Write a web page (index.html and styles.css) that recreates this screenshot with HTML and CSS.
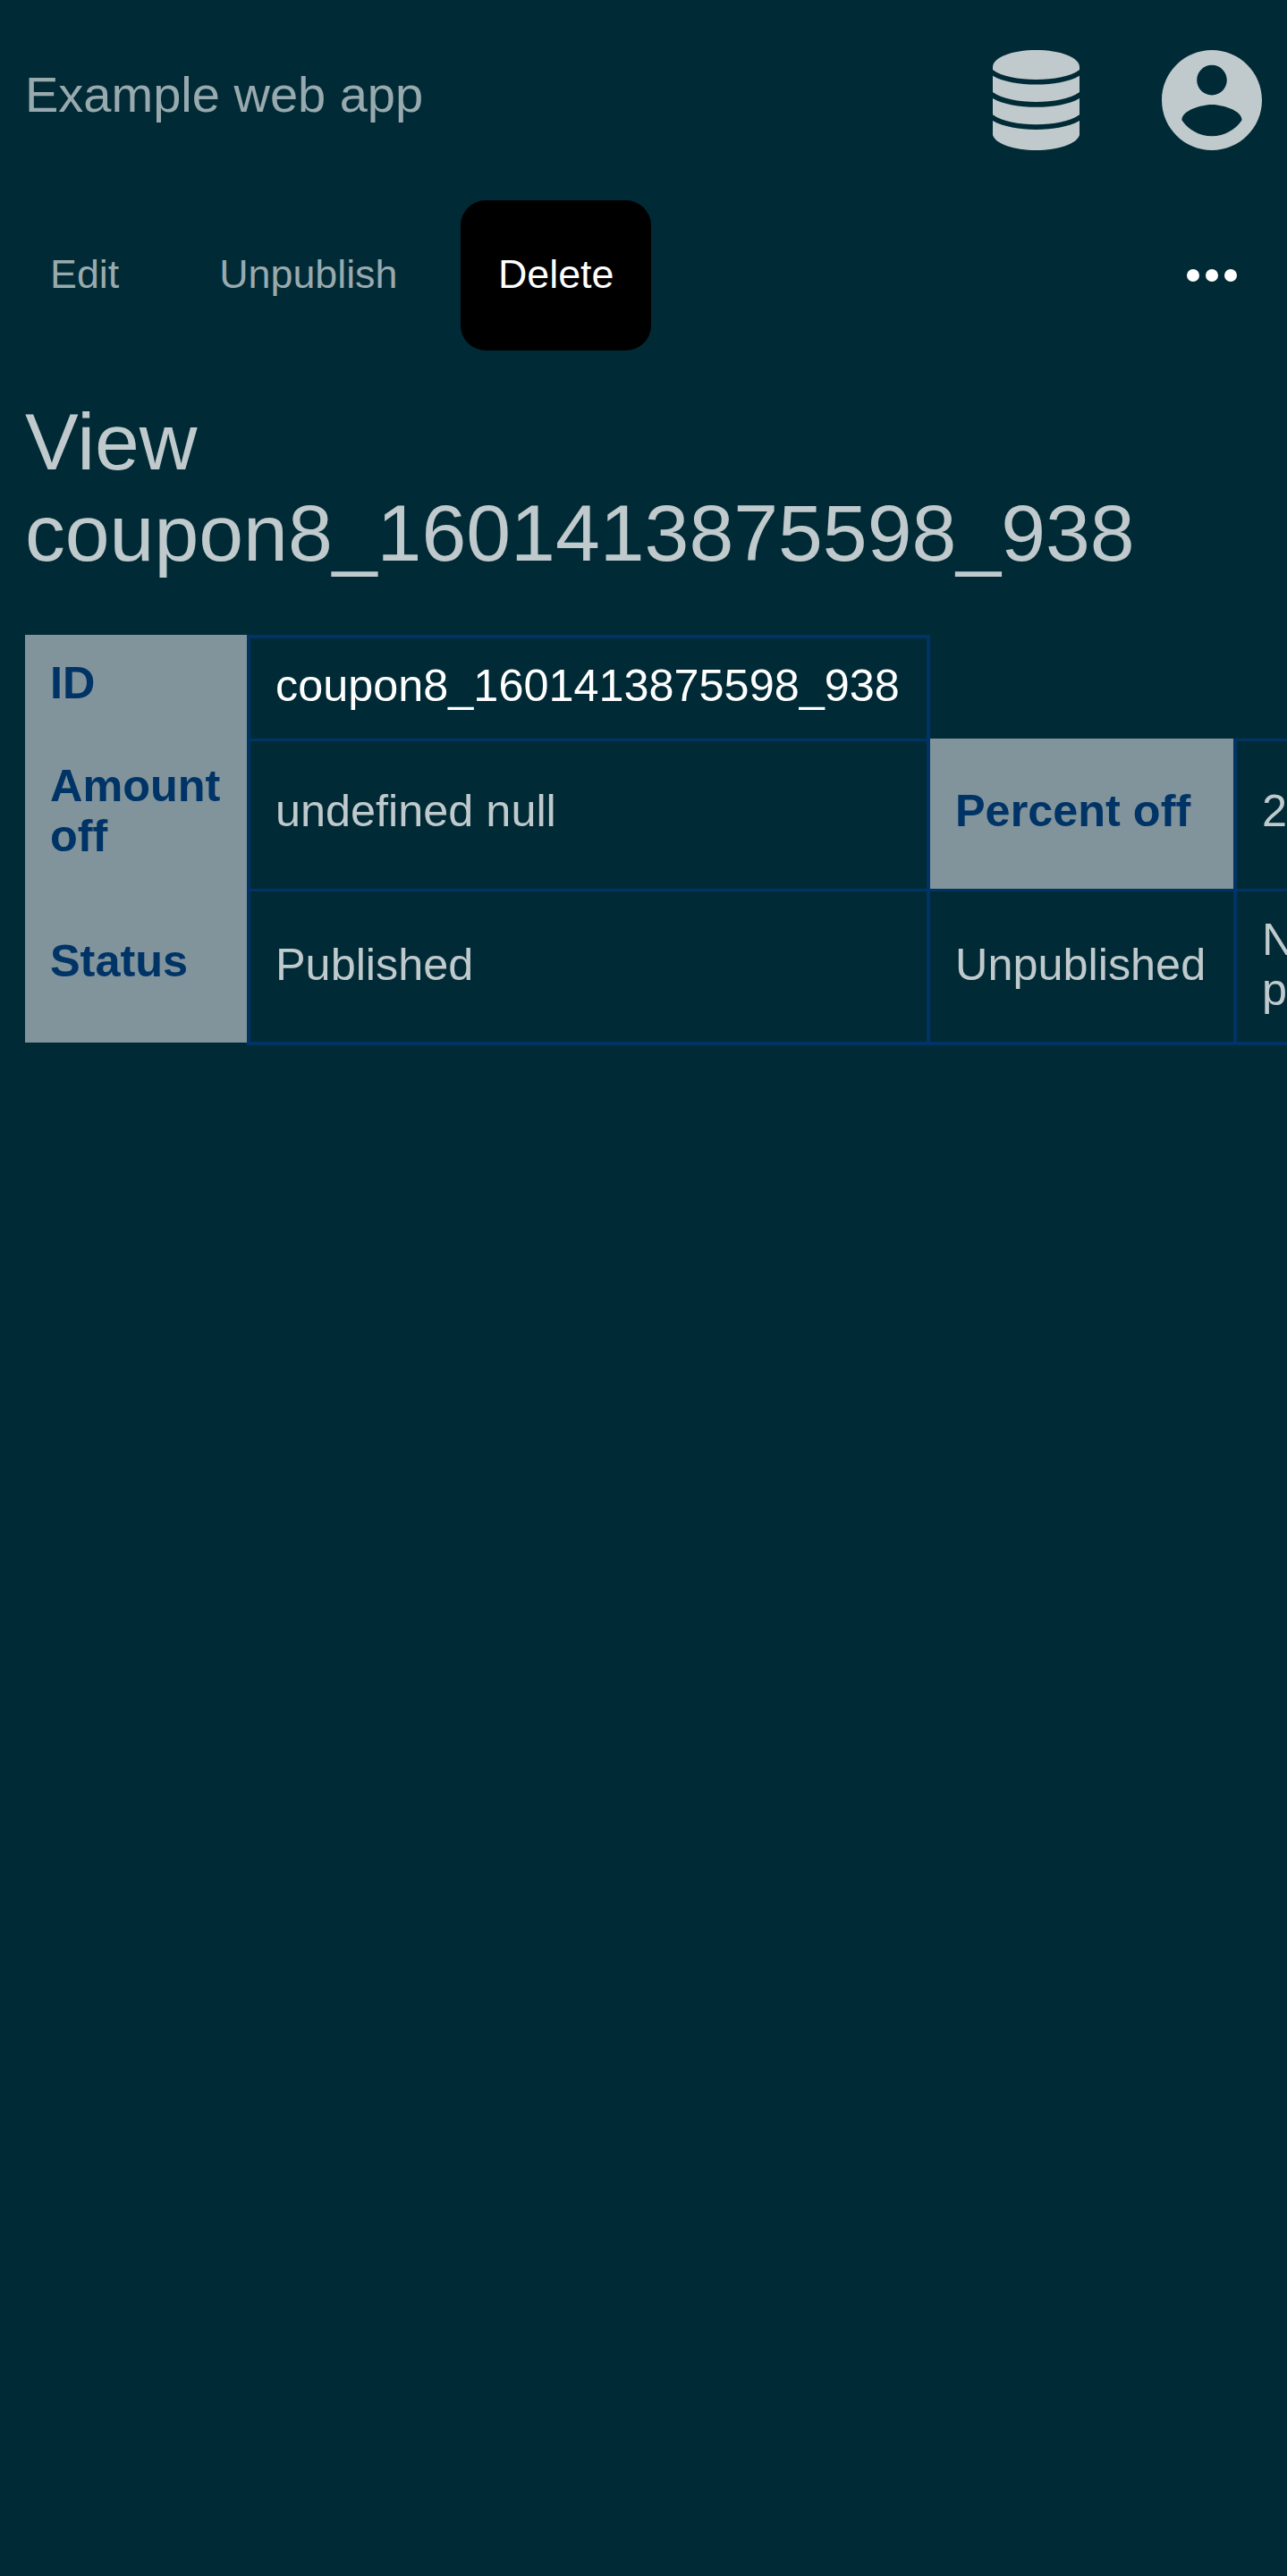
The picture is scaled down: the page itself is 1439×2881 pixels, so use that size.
FILE: index.html
```html
<!DOCTYPE html>
<html lang="en">
<head>
<meta charset="utf-8">
<title>Example web app</title>
<link rel="stylesheet" href="styles.css">
</head>
<body>
<header class="header">
  <a class="brand">Example web app</a>
  <div class="menus">
    <svg class="icon-database" viewBox="0 0 98 112" preserveAspectRatio="none" aria-label="Administration">
      <path d="M0 19C0 8 22 0 49 0s49 8 49 19v3C88 29.500 69 33 49 33S10 29.500 0 22z"/>
      <path d="M0 28.700C12 35.500 30 38.600 49 38.600s37-3.100 49-9.900V47C87 54.500 69 58 49 58S11 54.500 0 47z"/>
      <path d="M0 53.900C12 60.700 30 63.800 49 63.800s37-3.100 49-9.900V72.200C87 79.700 69 83.200 49 83.200S11 79.700 0 72.200z"/>
      <path d="M0 79.100C12 85.900 30 89 49 89s37-3.100 49-9.900V95C95 105 74 112 49 112S3 105 0 95z"/>
    </svg>
    <svg class="icon-account" viewBox="2 2 20 20" aria-label="Account">
      <path d="M12 2C6.480 2 2 6.480 2 12s4.480 10 10 10 10-4.480 10-10S17.520 2 12 2zm0 3c1.660 0 3 1.340 3 3s-1.340 3-3 3-3-1.340-3-3 1.340-3 3-3zm0 14.200c-2.500 0-4.710-1.280-6-3.220.03-1.990 4-3.080 6-3.080 1.990 0 5.970 1.090 6 3.080-1.290 1.940-3.500 3.220-6 3.220z"/>
    </svg>
  </div>
</header>
<nav class="navbar">
  <a class="nav-link">Edit</a>
  <a class="nav-link">Unpublish</a>
  <a class="nav-link active">Delete</a>
  <svg class="icon-more" viewBox="0 0 56 14" aria-label="More">
    <circle cx="7" cy="7" r="7"/><circle cx="28" cy="7" r="7"/><circle cx="49" cy="7" r="7"/>
  </svg>
</nav>
<main>
  <h1 class="title">View coupon8_1601413875598_938</h1>
  <div class="details">
    <div class="labels">
      <div class="label">ID</div>
      <div class="label">Amount off</div>
      <div class="label">Status</div>
    </div>
    <div class="values">
      <div class="cell first id">coupon8_1601413875598_938</div>
      <div class="cell first blank"></div>
      <div></div>
      <div class="cell">undefined null</div>
      <div class="cell heading">Percent off</div>
      <div class="cell">2</div>
      <div class="cell last">Published</div>
      <div class="cell last">Unpublished</div>
      <div class="cell last">N<br>p</div>
    </div>
  </div>
</main>
</body>
</html>
```

FILE: styles.css
```css
* { box-sizing: border-box; }

body {
  margin: 0;
  min-height: 100vh;
  overflow: hidden;
  background: #002b36;
  color: #c0cacd;
  font-family: "Liberation Sans", Arial, sans-serif;
  font-size: 50.4px;
  line-height: 56px;
}

.header {
  display: flex;
  justify-content: space-between;
  height: 224px;
  padding: 56px 28px;
}

.brand {
  padding-top: 18px;
  color: #99aaaf;
  font-size: 56px;
  line-height: 64px;
}

.menus { display: flex; gap: 92px; fill: #c0cacd; }
.icon-database { width: 97px; height: 112px; }
.icon-account { width: 112px; height: 112px; }

.navbar {
  display: flex;
  align-items: center;
  gap: 28px;
  height: 168px;
  padding: 0 56px 0 14px;
}

.nav-link {
  height: 168px;
  padding: 0 42px;
  border-radius: 28px;
  color: #99aaaf;
  font-size: 44.8px;
  line-height: 165px;
}

.active {
  margin-left: 0.5px;
  background: #000;
  color: #fff;
}

.icon-more { width: 56px; height: 14px; margin-left: auto; fill: #fff; }

.title {
  margin: 51px 28px 63px;
  font-size: 89.6px;
  font-weight: 400;
  line-height: 102px;
}

.details { display: flex; margin-left: 28px; }

.labels {
  flex: none;
  width: 248px;
  height: 456px;
  padding: 26px 28px;
  background: #81949b;
}

.label { height: 115px; color: #003366; font-weight: 700; }
.label + .label { height: 196px; }

.values {
  flex: 1;
  min-width: 0;
  display: grid;
  grid-template-columns: 760px 343px 1fr;
  grid-template-rows: 116px 168px 175px;
}

.cell {
  display: flex;
  align-items: center;
  min-width: 0;
  padding: 0 0 10px 28px;
  border-top: 3px solid #003366;
  border-left: 4px solid #003366;
  white-space: nowrap;
  overflow: hidden;
}

.first { border-top-width: 4px; padding-bottom: 7px; }
.last { border-bottom: 4px solid #003366; padding-bottom: 5px; }
.id { color: #fff; }
.blank { border-top: 0; }

.heading {
  padding-bottom: 7px;
  border-top: 0;
  background: #81949b;
  color: #003366;
  font-weight: 700;
}
```
